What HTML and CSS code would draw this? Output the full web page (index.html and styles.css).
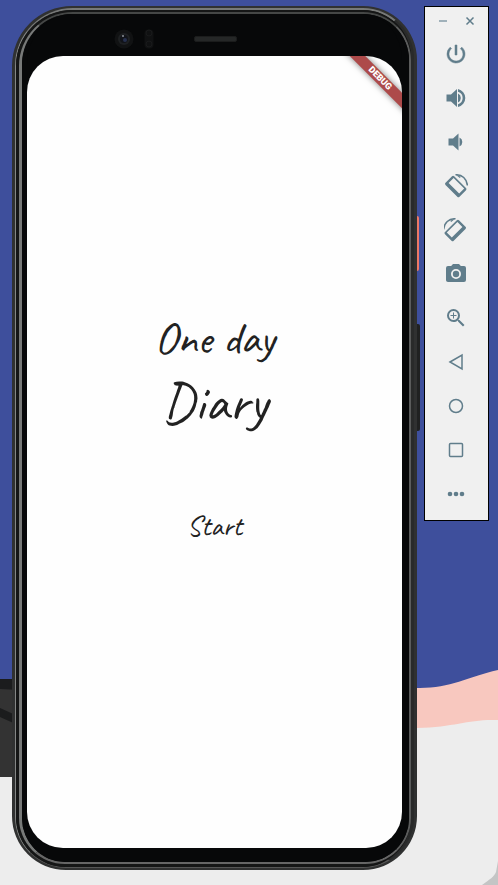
FILE: index.html
```html
<!DOCTYPE html>
<html lang="en">
<head>
  <meta charset="utf-8">
  <meta name="viewport" content="width=device-width, initial-scale=1">
  <title>One day Diary</title>
  <link rel="stylesheet" href="styles.css">
</head>
<body>
  <svg class="wallpaper" viewBox="0 0 498 885" preserveAspectRatio="none" aria-hidden="true">
    <path fill="#3e4f9c" d="M0 0h498v885H0z"/>
    <path fill="#f8c8bf" d="M300 700C360 690 395 688 420 688c30 0 48-11 78-18v80H300z"/>
    <path fill="#ededed" d="M0 777h200l100-49h117c40-1 50-9 81-8v165H0z"/>
    <path fill="#333" d="M0 679h60v98H0z"/>
    <path fill="#1b1c1d" d="M0 679h60v13L0 689zM0 708l20 9v9L0 717z"/>
    <path fill="#c4c5c5" d="M482 885c8-6 12-8 14-13l2-11v24z"/>
  </svg>

  <main class="phone">
    <span class="side-key side-key-power"></span>
    <span class="side-key side-key-volume"></span>
    <div class="rim"><div class="groove"><div class="frame">
      <div class="bezel">
        <div class="sensors">
          <svg class="lens" viewBox="0 0 20 20" aria-hidden="true">
            <circle cx="10" cy="10" r="9.500" fill="#111213"/>
            <circle cx="10" cy="10" r="6" fill="#1e2022"/>
            <circle cx="10" cy="10" r="4" fill="#111319"/>
            <circle cx="11" cy="11" r="2" fill="#26304e"/>
            <circle cx="9" cy="7" r="1" fill="#8c9299"/>
          </svg>
          <svg class="proximity" viewBox="0 0 10 20" aria-hidden="true">
            <rect x=".5" y=".5" width="9" height="19" rx="4" fill="#101112"/>
            <circle cx="5" cy="4" r="3" fill="none" stroke="#191a1b"/>
            <circle cx="5" cy="15" r="3" fill="none" stroke="#191a1b"/>
          </svg>
          <span class="speaker"></span>
        </div>
        <section class="screen">
          <span class="debug">DEBUG</span>
          <h1 class="title">One day <span class="title-large">Diary</span></h1>
          <button class="start" type="button">Start</button>
        </section>
      </div>
    </div></div></div>
  </main>

  <aside class="toolbar" aria-label="Emulator controls">
    <div class="window-controls">
      <button class="window-button" type="button" aria-label="Minimize"><svg viewBox="0 0 10 10"><path d="M1 5h8" stroke="#a0b1ba" stroke-width="2"/></svg></button>
      <button class="window-button" type="button" aria-label="Close"><svg viewBox="0 0 10 10"><path d="M1.500 1.500l7 7M8.500 1.500l-7 7" stroke="#607d8b" stroke-width="1.500"/></svg></button>
    </div>
    <button class="tool" type="button" aria-label="Power"><svg viewBox="0 0 24 24"><path stroke="#607d8b" stroke-width=".5" d="M13 3h-2v10h2zM17.830 5.170l-1.420 1.420A6.920 6.920 0 0 1 19 12a7 7 0 1 1-11.420-5.420L6.170 5.170A8.930 8.930 0 0 0 3 12a9 9 0 1 0 14.830-6.830z"/></svg></button>
    <button class="tool" type="button" aria-label="Volume up"><svg viewBox="0 0 24 24"><path d="M2.500 8.500v7H7l6 5.500V3L7 8.500zM14 7.500v9a5 5 0 0 0 0-9zM14 3v2.700a6.600 6.600 0 0 1 0 12.600V21a9.200 9.200 0 0 0 0-18z"/></svg></button>
    <button class="tool" type="button" aria-label="Volume down"><svg viewBox="0 0 24 24"><path d="M4.500 8.500v7H9l5.500 5V3.500L9 8.500zM15.500 7.500v9a5 5 0 0 0 0-9z"/></svg></button>
    <button class="tool" type="button" aria-label="Rotate left"><svg viewBox="0 0 24 24"><g id="tilted-device"><path fill-rule="evenodd" d="M1.500 8.700 8 2.200a1.600 1.600 0 0 1 2.200 0L22 14a1.600 1.600 0 0 1 0 2.200l-6.500 6.500a1.600 1.600 0 0 1-2.200 0L1.500 10.900a1.600 1.600 0 0 1 0-2.200zm3.100.3L15.200 19.600l5-5L9.600 4z"/><path d="M11.500.8C18 .2 23 5 23.400 11.500" fill="none" stroke="#607d8b" stroke-width="1.500"/><path d="M11.500.5l4.300 3.600 1-1.300z"/></g></svg></button>
    <button class="tool" type="button" aria-label="Rotate right"><svg viewBox="0 0 24 24"><use href="#tilted-device" transform="translate(23 0) scale(-1 1)"/></svg></button>
    <button class="tool" type="button" aria-label="Take screenshot"><svg viewBox="0 0 24 24"><circle cx="12" cy="12" r="3.200"/><path d="M9 2 7.170 4H4a2 2 0 0 0-2 2v12c0 1.100.9 2 2 2h16a2 2 0 0 0 2-2V6a2 2 0 0 0-2-2h-3.170L15 2zm3 15a5 5 0 1 1 0-10 5 5 0 0 1 0 10z"/></svg></button>
    <button class="tool" type="button" aria-label="Zoom"><svg viewBox="0 0 24 24"><path d="M15.500 14h-.79l-.28-.27A6.470 6.470 0 0 0 16 9.500 6.500 6.500 0 1 0 9.500 16c1.610 0 3.090-.59 4.230-1.570l.27.280v.79l5 4.990L20.490 19zm-6 0a4.500 4.500 0 1 1 0-9 4.500 4.500 0 0 1 0 9zM10 6.500H9V9H6.500v1H9v2.500h1V10h2.500V9H10z"/></svg></button>
    <button class="tool outlined" type="button" aria-label="Back"><svg viewBox="0 0 24 24"><path d="M6 12l12-7v14z"/></svg></button>
    <button class="tool outlined" type="button" aria-label="Home"><svg viewBox="0 0 24 24"><circle cx="12" cy="12" r="6.500"/></svg></button>
    <button class="tool outlined" type="button" aria-label="Overview"><svg viewBox="0 0 24 24"><rect x="5.500" y="5.500" width="13" height="13" rx="1"/></svg></button>
    <button class="tool" type="button" aria-label="More"><svg viewBox="0 0 24 24"><circle cx="6" cy="12" r="2.300"/><circle cx="12" cy="12" r="2.300"/><circle cx="18" cy="12" r="2.300"/></svg></button>
  </aside>
</body>
</html>
```
FILE: styles.css
```css
* {
  box-sizing: border-box;
}

body {
  display: flex;
  gap: 7px;
  min-height: 100vh;
  margin: 0;
  padding: 6px 9px 15px 12px;
  font-family: Roboto, sans-serif;
}

button {
  margin: 0;
  padding: 0;
  border: 0;
  background: none;
  color: inherit;
  cursor: pointer;
}

.wallpaper {
  position: absolute;
  inset: 0;
  z-index: -2;
  width: 100%;
  height: 100%;
}

/* Phone body: nested metal rings, then the black bezel */
.phone {
  position: relative;
  display: flex;
  flex: 1;
  border: solid #303131;
  border-width: 2px 3px 2px 3px;
  border-radius: 60px 54px 54px 54px;
  background: #303131;
}

.rim,
.groove,
.frame,
.bezel {
  display: flex;
  flex: 1;
  border-style: solid;
}

.rim {
  border-width: 2px 3px 1px 1px;
  border-color: #777978 #292a2a #555 #858786;
  border-radius: 58px 51px 51px 51px;
  background: #151515;
}

.groove {
  border-width: 2px 0 3px 3px;
  border-color: #151616;
  border-radius: 56px 48px 50px 50px;
  background: #151616;
}

.frame {
  border-width: 2px 2px 2px 3px;
  border-color: #454746 #5b5c5c #666 #777978;
  border-radius: 54px 48px 46px 46px;
  background: #070809;
}

.bezel {
  flex-direction: column;
  border-width: 0 7px 14px 5px;
  border-color: #070809;
  border-radius: 50px 46px 44px 44px;
  background: #070809;
}

.sensors {
  display: flex;
  align-items: center;
  justify-content: center;
  height: 42px;
  padding: 7px 118px 0 0;
}

.lens {
  width: 20px;
  height: 20px;
  margin-right: 10px;
}

.proximity {
  width: 10px;
  height: 20px;
  margin-right: 40px;
}

.speaker {
  width: 43px;
  height: 6px;
  margin-right: -40px;
  border: 1px solid #1b1c1c;
  border-radius: 2px;
  background: #252727;
}

.side-key {
  position: absolute;
  right: -5px;
  z-index: -1;
  width: 6px;
  border-radius: 2px;
}

.side-key-power {
  top: 208px;
  height: 55px;
  background: #ed7866;
}

.side-key-volume {
  top: 316px;
  right: -6px;
  height: 107px;
  background: #202121;
}

.screen {
  position: relative;
  display: flex;
  flex: 1;
  flex-direction: column;
  align-items: center;
  justify-content: center;
  padding-bottom: 52px;
  overflow: hidden;
  border-radius: 36px;
  background: #fefefe;
  color: #222;
  font-variant-ligatures: no-contextual;
}

.title {
  display: flex;
  flex-direction: column;
  align-items: center;
  margin: 0 0 74px;
  font-family: Caveat, cursive;
  font-size: 45px;
  font-weight: 400;
  line-height: 60px;
}

.title-large {
  font-size: 55px;
  line-height: 66px;
}

.start {
  font-family: Caveat, cursive;
  font-size: 28px;
  font-weight: 400;
  font-variant-ligatures: inherit;
  line-height: 34px;
}

.debug {
  position: absolute;
  top: 17px;
  right: -28px;
  width: 100px;
  background: #ad4a4a;
  box-shadow: 0 0 6px rgba(0, 0, 0, 0.5);
  color: #fff;
  font-size: 9px;
  font-weight: 900;
  line-height: 11px;
  text-align: center;
  transform: rotate(45deg);
}

.toolbar {
  display: flex;
  flex-direction: column;
  align-self: flex-start;
  width: 65px;
  padding: 0 1px 4px 0;
  border: 1px solid #000;
  background: #f0f0f0;
}

.window-controls {
  display: flex;
  align-items: center;
  justify-content: center;
  gap: 17px;
  height: 25px;
  padding-top: 3px;
}

.window-button,
.window-button svg {
  display: block;
  width: 10px;
  height: 10px;
}

.tool {
  display: flex;
  align-items: center;
  justify-content: center;
  height: 44px;
}

.tool svg {
  width: 24px;
  height: 24px;
  fill: #607d8b;
}

.outlined svg {
  fill: none;
  stroke: #607d8b;
  stroke-width: 1.5px;
}
```
